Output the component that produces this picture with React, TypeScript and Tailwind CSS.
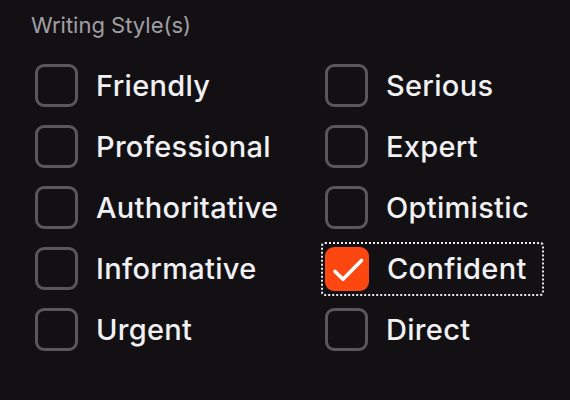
import React from "react";

const left = ["Friendly", "Professional", "Authoritative", "Informative", "Urgent"];
const right = ["Serious", "Expert", "Optimistic", "Confident", "Direct"];

function Box({ checked }: { checked: boolean }) {
  if (checked) {
    return (
      <div className="w-[44px] h-[44px] rounded-[9px] bg-[#fd4710] flex items-center justify-center shrink-0">
        <svg viewBox="0 0 44 44" className="w-[44px] h-[44px]">
          <path d="M10 24.5 L18 32.3 L36.5 13.5" fill="none" stroke="#ffffff" strokeWidth="3.6" strokeLinecap="round" strokeLinejoin="round" />
        </svg>
      </div>
    );
  }
  return <div className="w-[43px] h-[43px] rounded-[9px] border-[3px] border-[#59575c] shrink-0" />;
}

function Item({ label, checked }: { label: string; checked?: boolean }) {
  const content = (
    <div className="flex items-center gap-[18px]">
      <Box checked={!!checked} />
      <span className="text-[29px] font-[450] text-[#f1f0f3] tracking-[0.3px] leading-none">{label}</span>
    </div>
  );
  if (checked) {
    return (
      <div className="h-[61px] flex items-center">
        <div className="-ml-[4px] pl-[2px] pr-[18px] py-[3px] border-2 border-dotted border-[#e8e8e8] rounded-[4px] w-[223px]">
          {content}
        </div>
      </div>
    );
  }
  return <div className="h-[61px] flex items-center">{content}</div>;
}

export default function App() {
  return (
    <div
      className="w-[570px] h-[400px] bg-[#121013] overflow-hidden"
      style={{ fontFamily: "Inter, 'Liberation Sans', sans-serif" }}
    >
      <div className="pt-[12px] pl-[31px] text-[22px] text-[#a19fa4] leading-[26px]">Writing Style(s)</div>
      <div className="mt-[17px] pl-[35px] grid grid-cols-[290px_1fr]">
        <div className="flex flex-col">
          {left.map((l) => (
            <Item key={l} label={l} />
          ))}
        </div>
        <div className="flex flex-col">
          {right.map((l) => (
            <Item key={l} label={l} checked={l === "Confident"} />
          ))}
        </div>
      </div>
    </div>
  );
}
